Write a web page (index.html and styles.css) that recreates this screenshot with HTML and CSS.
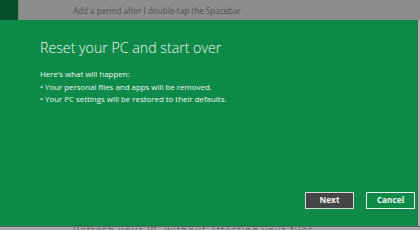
FILE: index.html
```html
<!DOCTYPE html>
<html>
<head>
<meta charset="utf-8">
<link rel="stylesheet" href="styles.css">
</head>
<body>
<div class="screen">
  <div class="topbar">
    <div class="tile"></div>
    <div class="topbar-text">Add a period after I double-tap the Spacebar</div>
  </div>
  <div class="middle">
    <div class="panel">
      <div class="content">
        <h1 class="title">Reset your PC and start over</h1>
        <div class="body">
          <p>Here’s what will happen:</p>
          <p>• Your personal files and apps will be removed.</p>
          <p>• Your PC settings will be restored to their defaults.</p>
        </div>
      </div>
      <div class="actions">
        <button class="btn btn-next">Next</button>
        <button class="btn btn-cancel">Cancel</button>
      </div>
    </div>
    <div class="edge"></div>
  </div>
  <div class="bottom"><span class="bottom-text">Refresh your PC without affecting your files</span></div>
</div>
</body>
</html>
```
FILE: styles.css
```css
html, body {
  margin: 0;
  padding: 0;
  background: #8c8c8c;
}
.screen {
  width: 420px;
  height: 230px;
  display: flex;
  flex-direction: column;
  font-family: "Open Sans", "Noto Sans", sans-serif;
  overflow: hidden;
}
.topbar {
  height: 20px;
  display: flex;
  align-items: center;
  background: #8d8d8d;
  flex: none;
}
.tile {
  width: 19px;
  height: 20px;
  background: #064f2a;
  border-right: 1px solid #7a8a80;
  box-sizing: border-box;
}
.topbar-text {
  margin-left: 54px;
  font-size: 8.1px;
  color: #505050;
}
.middle {
  display: flex;
  height: 206px;
  flex: none;
}
.panel {
  width: 417px;
  background: #0d8a47;
  display: flex;
  flex-direction: column;
  justify-content: space-between;
  box-sizing: border-box;
  padding: 18px 2px 17px 40px;
}
.edge {
  flex: 1;
  background: linear-gradient(to right, #5a5a5a 0, #5a5a5a 1px, #b0b0b0 1px);
}
.title {
  margin: 0;
  font-size: 14.2px;
  font-weight: 300;
  color: #f2f7f3;
  line-height: 20px;
}
.body {
  margin-top: 10px;
  color: #eef6f0;
  font-size: 7.9px;
  line-height: 12.5px;
}
.body p {
  margin: 0;
}
.actions {
  display: flex;
  justify-content: flex-end;
  gap: 12px;
}
.btn {
  width: 49px;
  height: 17px;
  box-sizing: border-box;
  font-family: inherit;
  font-size: 8.3px;
  font-weight: 700;
  color: #f4f4f4;
  padding: 0;
  line-height: 1;
}
.btn-next {
  background: #444545;
  border: 1px solid #d8d8d8;
}
.btn-cancel {
  background: #0d8a47;
  border: 1px solid #e8f2ea;
}
.bottom {
  flex: 1;
  background: linear-gradient(to bottom, #5e5e5e 0, #5e5e5e 1px, #a9a9a9 1px);
  position: relative;
  overflow: hidden;
}
.bottom-text {
  position: absolute;
  left: 73px;
  top: -3px;
  font-size: 10px;
  letter-spacing: 0.9px;
  color: #666;
  white-space: nowrap;
}
```
